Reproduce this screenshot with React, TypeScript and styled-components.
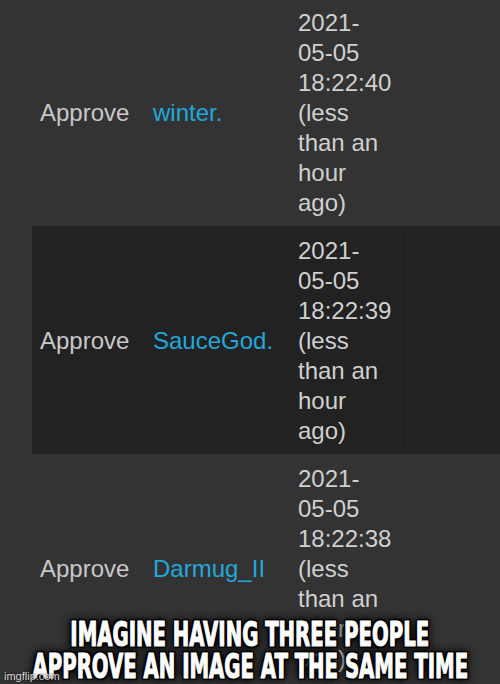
import { FC } from "react";
import styled, { createGlobalStyle } from "styled-components";

type Approval = { user: string; time: string };

const approvals: Approval[] = [
  { user: "winter.", time: "18:22:40" },
  { user: "SauceGod.", time: "18:22:39" },
  { user: "Darmug_II", time: "18:22:38" },
];

const App: FC = () => {
  return (
    <Page>
      <GlobalStyle />
      <Table>
        {approvals.map((a, i) => (
          <Row key={a.user} $dark={i % 2 === 1}>
            <Action>Approve</Action>
            <UserCell>
              <UserLink href="#">{a.user}</UserLink>
            </UserCell>
            <DateCell>
              2021-
              <wbr />
              <Keep>05-05</Keep> {a.time} (less than an hour ago)
            </DateCell>
            <Spare $dark={i % 2 === 1} />
          </Row>
        ))}
      </Table>
      <Caption>
        <CaptionLine>IMAGINE HAVING THREE PEOPLE</CaptionLine>
        <CaptionLine>APPROVE AN IMAGE AT THE SAME TIME</CaptionLine>
      </Caption>
      <Watermark>imgflip.com</Watermark>
    </Page>
  );
};

export default App;

const GlobalStyle = createGlobalStyle`
  html, body {
    margin: 0;
    padding: 0;
    background: #333333;
  }
`;

const Page = styled.div`
  position: relative;
  width: 500px;
  height: 684px;
  overflow: hidden;
  background: #333333;
  font-family: "Liberation Sans", Arial, sans-serif;
  font-size: 24px;
  line-height: 30px;
`;

const Table = styled.div`
  display: flex;
  flex-direction: column;
  margin-top: -2px;
  margin-left: 32px;
`;

const Row = styled.div<{ $dark: boolean }>`
  display: grid;
  grid-template-columns: 113px 145px 114px 1fr;
  align-items: center;
  background: ${(p) => (p.$dark ? "#222222" : "transparent")};
`;

const Cell = styled.div`
  padding: 10px 8px 8px 8px;
`;

const Action = styled(Cell)`
  color: #c8c8c8;
`;

const UserCell = styled(Cell)`
  padding-right: 0;
`;

const UserLink = styled.a`
  color: #22a8da;
  text-decoration: none;
`;

const DateCell = styled(Cell)`
  color: #d0d0d0;
`;

const Keep = styled.span`
  white-space: nowrap;
`;

const Spare = styled.div<{ $dark: boolean }>`
  align-self: stretch;
  border-left: 1px solid ${(p) => (p.$dark ? "#1d1d1d" : "transparent")};
`;

const Caption = styled.div`
  position: absolute;
  left: 0;
  right: 0;
  top: 619px;
  display: flex;
  flex-direction: column;
  align-items: center;
`;

const CaptionLine = styled.div`
  font-family: "Liberation Sans Narrow", "DejaVu Sans Condensed", "Liberation Sans", sans-serif;
  font-weight: 700;
  font-size: 30px;
  line-height: 32px;
  color: #ffffff;
  white-space: nowrap;
  transform: scale(0.73, 1.12);
  -webkit-text-stroke: 1px #ffffff;
  text-shadow: 2px 2px 0 #000, -2px -2px 0 #000, 2px -2px 0 #000,
    -2px 2px 0 #000, 0 2px 0 #000, 0 -2px 0 #000, 2px 0 0 #000,
    -2px 0 0 #000, 0 0 6px #000, 0 0 10px #000, 0 0 10px #000;
`;

const Watermark = styled.div`
  position: absolute;
  left: 4px;
  bottom: 2px;
  font-family: "Liberation Sans", Arial, sans-serif;
  font-size: 11px;
  line-height: 12px;
  color: rgba(255, 255, 255, 0.85);
  text-shadow: 0 0 2px #000;
`;
